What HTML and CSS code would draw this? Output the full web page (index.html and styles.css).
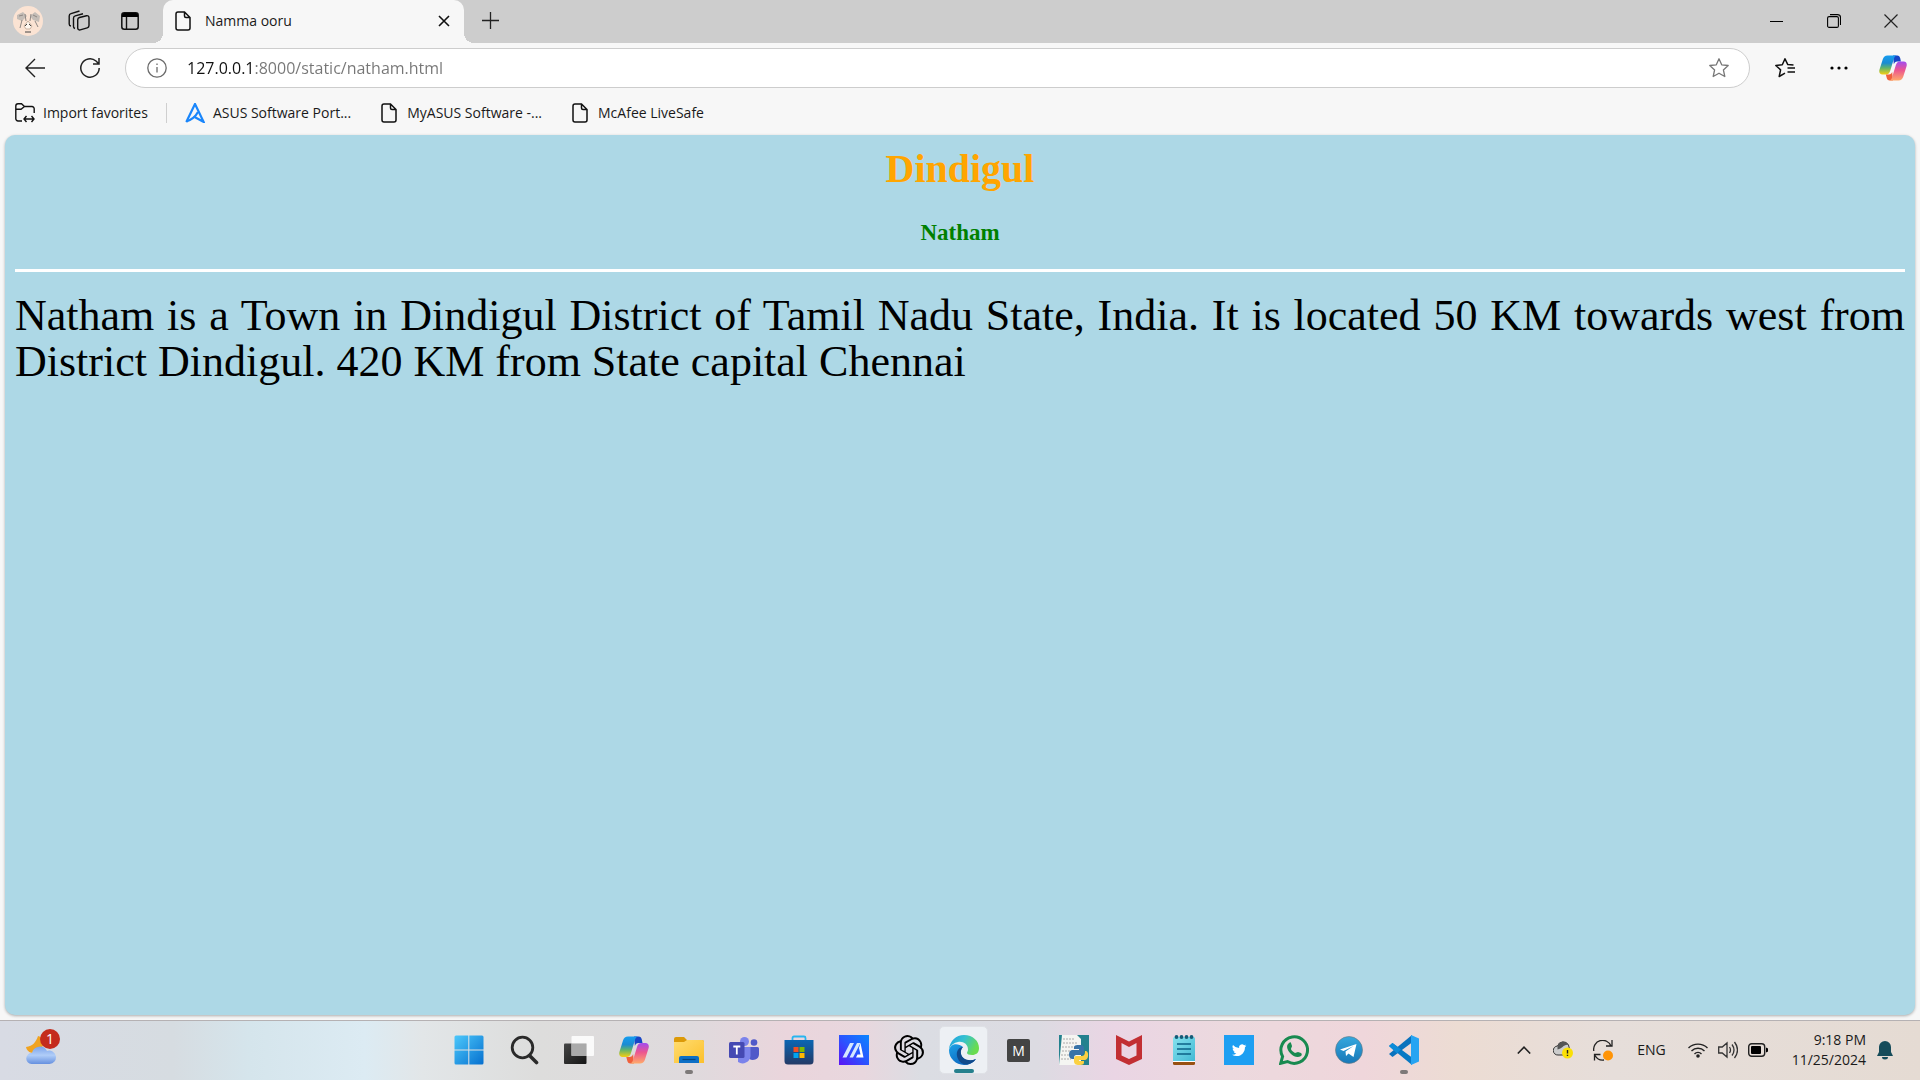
FILE: index.html
```html
<!DOCTYPE html>
<html lang="en">
<head>
<meta charset="utf-8">
<meta name="viewport" content="width=device-width, initial-scale=1">
<title>Namma ooru</title>
<link rel="stylesheet" href="styles.css">
</head>
<body>
<svg class="defs" width="0" height="0" aria-hidden="true">
  <defs>
    <linearGradient id="cp-blue" x1="0" y1="0" x2="0" y2="1"><stop offset="0" stop-color="#159df0"/><stop offset=".4" stop-color="#1b8bd2"/><stop offset=".65" stop-color="#5fb36d"/><stop offset="1" stop-color="#f6cf12"/></linearGradient>
    <linearGradient id="cp-pink" x1="0" y1="0" x2="0" y2="1"><stop offset="0" stop-color="#a14cf0"/><stop offset=".45" stop-color="#ec5590"/><stop offset="1" stop-color="#ffaa6a"/></linearGradient>
    <linearGradient id="win" x1="0" y1="0" x2="1" y2="1"><stop offset="0" stop-color="#4cc8fb"/><stop offset="1" stop-color="#0670cf"/></linearGradient>
    <linearGradient id="dark" x1="0" y1="0" x2="1" y2="1"><stop offset="0" stop-color="#454545"/><stop offset="1" stop-color="#151515"/></linearGradient>
    <linearGradient id="folder" x1="0" y1="0" x2="1" y2="1"><stop offset="0" stop-color="#ffdc70"/><stop offset="1" stop-color="#fcc02b"/></linearGradient>
    <linearGradient id="store" x1="0" y1="0" x2="0" y2="1"><stop offset="0" stop-color="#0b66b3"/><stop offset="1" stop-color="#243a66"/></linearGradient>
    <linearGradient id="ma" x1="1" y1="0" x2="0" y2="1"><stop offset="0" stop-color="#0a86ff"/><stop offset=".5" stop-color="#2a55ff"/><stop offset="1" stop-color="#5b12f5"/></linearGradient>
    <linearGradient id="edge-top" x1="0" y1="0" x2="1" y2=".4"><stop offset="0" stop-color="#1b9de2"/><stop offset=".5" stop-color="#35c1d0"/><stop offset="1" stop-color="#69dc50"/></linearGradient>
    <linearGradient id="edge-body" x1="0" y1="0" x2=".7" y2="1"><stop offset="0" stop-color="#1ca1e6"/><stop offset="1" stop-color="#0b62bd"/></linearGradient>
    <linearGradient id="note" x1="0" y1="0" x2="1" y2="1"><stop offset="0" stop-color="#86e2ee"/><stop offset="1" stop-color="#42b9d4"/></linearGradient>
    <linearGradient id="tele" x1="0" y1="0" x2="0" y2="1"><stop offset="0" stop-color="#35a8de"/><stop offset="1" stop-color="#1878b8"/></linearGradient>
    <linearGradient id="cloud" x1="0" y1="0" x2="0" y2="1"><stop offset="0" stop-color="#7ba3ea"/><stop offset=".5" stop-color="#b0cdf8"/><stop offset="1" stop-color="#6690df"/></linearGradient>
    <symbol id="file" viewBox="0 0 16 20"><path d="M3 1h6.500L15 6.500V17a2 2 0 0 1-2 2H3a2 2 0 0 1-2-2V3a2 2 0 0 1 2-2zM9.500 1v4a1.500 1.500 0 0 0 1.500 1.500h4" fill="none" stroke="#111" stroke-width="1.500"/></symbol>
    <symbol id="copilot" viewBox="0 0 30 28">
      <path d="M15 .5h4.500c2 0 2.800 1.200 3.300 3L23.500 7h-4c-2 0-3 1.200-3.600 3z" fill="#1745c6"/>
      <path d="M9 .5h10c-2 .5-2.600 2-3.200 4L12 17c-.8 2.500-2 4-4.500 4H3.500C1 21-.4 19 .4 16L4 4.500C4.800 2 6.500.5 9 .5z" fill="url(#cp-blue)"/>
      <path d="M15 27.500h-3.500c-2 0-2.800-1.200-3.300-3L7.300 21h3.200c2 0 3-1.200 3.600-3z" fill="#f0603c"/>
      <path d="M21 27.500H11c2-.5 2.600-2 3.200-4L18 11c.8-2.500 2-4 4.500-4h4c2.500 0 3.900 2 3.100 5L26 23.500c-.8 2.500-2.500 4-5 4z" fill="url(#cp-pink)"/>
    </symbol>
  </defs>
</svg>

<div class="window">
  <header class="titlebar">
    <div class="strip-tools">
      <button class="strip-btn" aria-label="Profile">
        <svg width="30" height="30" viewBox="0 0 30 30"><circle cx="15" cy="15" r="15" fill="#fbe3d3"/><path d="M4 9l6-3 4 4-5 5-5-2zM17 10l5-4 5 4-1 6-6-2z" fill="#c4bdb7"/><path d="M6 10l4-1M20 9l4 2M9 14l-2 8M22 15l3 6M12 8l1 7M18 8l-1 7" stroke="#8f8884"/><path d="M11 20l4-5 4 5-2 3h-4z" fill="#fff7ef" stroke="#c9b19f"/><path d="M12 20l2-2M18 20l-2-2M12 26h6" stroke="#444"/></svg>
      </button>
      <button class="strip-btn" aria-label="Workspaces">
        <svg width="22" height="22" viewBox="0 0 22 22" fill="none" stroke="#111" stroke-width="1.400"><path d="M11.500 7.500l7-1.800a2 2 0 0 1 2.500 2v7.800a2.500 2.500 0 0 1-1.800 2.400l-7 2a2 2 0 0 1-2.500-2v-8a2.500 2.500 0 0 1 1.800-2.400z"/><path d="M7 18.500a2 2 0 0 1-1.500-2V8.200a2.500 2.500 0 0 1 1.800-2.400l7.700-2M3 16a2 2 0 0 1-1.800-2V6a2.500 2.500 0 0 1 1.800-2.400L11.500 1"/></svg>
      </button>
      <button class="strip-btn" aria-label="Tab actions">
        <svg width="18" height="18" viewBox="0 0 18 18"><rect x=".8" y=".8" width="16.400" height="16.400" rx="2.500" fill="none" stroke="#111" stroke-width="1.500"/><path d="M1 5V3a2 2 0 0 1 2-2h12a2 2 0 0 1 2 2v2z"/><path d="M5.500 5v12" stroke="#111" stroke-width="1.400"/></svg>
      </button>
    </div>
    <div class="tab">
      <svg width="16" height="20"><use href="#file"/></svg>
      <span class="tab-title">Namma ooru</span>
      <button class="tab-close" aria-label="Close tab"><svg width="12" height="12" viewBox="0 0 12 12"><path d="M1 1l10 10M11 1L1 11" stroke="#111" stroke-width="1.600"/></svg></button>
    </div>
    <button class="new-tab" aria-label="New tab"><svg width="18" height="18" viewBox="0 0 18 18"><path d="M8.500 0v17M0 8.500h17" stroke="#222" stroke-width="1.300"/></svg></button>
    <div class="window-controls">
      <button aria-label="Minimize"><svg width="14" height="14" viewBox="0 0 14 14"><path d="M0 7.500h13" stroke="#000"/></svg></button>
      <button aria-label="Restore"><svg width="14" height="14" viewBox="0 0 14 14" fill="none" stroke="#000" stroke-width="1.100"><rect x=".6" y="2.600" width="10.800" height="10.800" rx="1.500"/><path d="M3 .6h7.500a3 3 0 0 1 3 3V11"/></svg></button>
      <button aria-label="Close window"><svg width="14" height="14" viewBox="0 0 14 14"><path d="M.5.5l13 13M13.500.5l-13 13" stroke="#222" stroke-width="1.200"/></svg></button>
    </div>
  </header>

  <div class="toolbar">
    <button class="tool-btn" aria-label="Back"><svg width="20" height="20" viewBox="0 0 20 20" fill="none" stroke="#222" stroke-width="1.400"><path d="M20 10H1M10 1L1 10l9 9"/></svg></button>
    <button class="tool-btn" aria-label="Refresh"><svg width="20" height="20" viewBox="0 0 20 20" fill="none" stroke="#222" stroke-width="1.500"><path d="M19.200 10A9.200 9.200 0 1 1 16 3l3 3M19 0v6h-6"/></svg></button>
    <div class="address">
      <svg width="20" height="20" viewBox="0 0 20 20" fill="none" stroke="#6b6b6b" stroke-width="1.300"><circle cx="10" cy="10" r="9.200"/><path d="M10 9v5.500M10 5.500v1.600"/></svg>
      <input class="address-input" type="text" aria-label="Address" value="127.0.0.1:8000/static/natham.html">
      <button class="star-btn" aria-label="Add to favorites"><svg width="20" height="20" viewBox="0 0 20 20" fill="none" stroke="#777" stroke-width="1.300" stroke-linejoin="round"><path d="M10 .8l2.700 6 6.500.7-4.800 4.400 1.400 6.600L10 15.200l-5.800 3.300 1.400-6.600L.8 7.500l6.500-.7z"/></svg></button>
    </div>
    <div class="toolbar-end">
      <button class="side-btn" aria-label="Favorites"><svg width="20" height="20" viewBox="0 0 20 20" fill="none" stroke="#111" stroke-width="1.500" stroke-linejoin="round"><path d="M18.500 7l-5.700-.4L10 .8 7.300 6.800.8 7.500l4.800 4.400-1.400 6.600 5.800-3.300M12.500 10H20M12.500 14H20"/></svg></button>
      <button class="side-btn" aria-label="Settings and more"><svg width="18" height="4" viewBox="0 0 18 4"><circle cx="2" cy="2" r="1.600"/><circle cx="9" cy="2" r="1.600"/><circle cx="16" cy="2" r="1.600"/></svg></button>
      <button class="side-btn" aria-label="Copilot"><svg width="28" height="26"><use href="#copilot"/></svg></button>
    </div>
  </div>

  <nav class="favorites" aria-label="Favorites bar">
    <button class="favorite"><svg width="20" height="20" viewBox="0 0 20 20" fill="none" stroke="#111" stroke-width="1.400"><path d="M7 18H3a2.200 2.200 0 0 1-2.200-2.200V3A2.200 2.200 0 0 1 3 .8h3.500l3 2.700H17A2.200 2.200 0 0 1 19.200 5.700V10M.8 6.200H6l3.500-2.700M9 16h10M11.500 13L9 16l2.500 3M16.500 13l2.500 3-2.500 3"/></svg>Import favorites</button>
    <span class="divider"></span>
    <div class="links">
      <a class="favorite" href="#asus"><svg width="20" height="20" viewBox="0 0 20 20" fill="none" stroke="#1a86fb" stroke-width="2.200"><path d="M1.300 19L10 1l8.700 18-10-5.500"/><path d="M1.300 18.500C6 17 10.500 13.500 13 9"/></svg>ASUS Software Port...</a>
      <a class="favorite" href="#myasus"><svg width="20" height="20"><use href="#file"/></svg>MyASUS Software -...</a>
      <a class="favorite" href="#mcafee"><svg width="20" height="20"><use href="#file"/></svg>McAfee LiveSafe</a>
    </div>
  </nav>

  <main class="page">
    <h1>Dindigul</h1>
    <h3>Natham</h3>
    <hr>
    <p>Natham is a Town in Dindigul District of Tamil Nadu State, India. It is located 50 KM towards west from District Dindigul. 420 KM from State capital Chennai</p>
  </main>

  <footer class="taskbar">
    <button class="weather" aria-label="Weather">
      <svg width="30" height="30" viewBox="0 0 30 30"><path d="M12 1c-2 6-5 10-12 11 1 5 5 6 9 6l8-7-2-9z" fill="#f0a321"/><path d="M5.500 29a5.500 5.500 0 1 1 .5-11 8 8 0 0 1 15-2 6.700 6.700 0 1 1 2.500 13z" fill="url(#cloud)"/></svg>
      <span class="badge">1</span>
    </button>

    <div class="apps">
      <button class="app" aria-label="Start"><svg width="30" height="30" viewBox="0 0 30 30" fill="url(#win)"><path d="M2 .5h12.300v14H.5V2A1.500 1.500 0 0 1 2 .5zM15.300.5H28A1.500 1.500 0 0 1 29.500 2v12.500H15.300zM.5 15.500h13.800v14H2A1.500 1.500 0 0 1 .5 28zM15.300 15.500h14.200V28a1.500 1.500 0 0 1-1.500 1.500H15.300z"/></svg></button>
      <button class="app" aria-label="Search"><svg width="30" height="30" viewBox="0 0 30 30" fill="none" stroke="#2a2a2a"><circle cx="13.500" cy="12.500" r="10.300" stroke-width="2.800"/><path d="M20.500 20.500l7 7" stroke-width="3.600" stroke-linecap="round"/></svg></button>
      <button class="app" aria-label="Task view"><svg width="30" height="30" viewBox="0 0 30 30"><rect y="8.500" width="22.500" height="20.500" rx="1" fill="url(#dark)"/><rect x="7.500" y="1" width="22.500" height="20" rx="1" fill="#fff" opacity=".85"/><path d="M7.500 8.500h15V21h-15z" fill="#aaa"/></svg></button>
      <button class="app" aria-label="Copilot"><svg width="30" height="28"><use href="#copilot"/></svg></button>
      <button class="app" aria-label="File Explorer"><svg width="30" height="30" viewBox="0 0 30 30"><path d="M0 4a2 2 0 0 1 2-2h8l3 3h15a2 2 0 0 1 2 2v4H0z" fill="#dc9a08"/><path d="M0 7h10l3-2h15a2 2 0 0 1 2 2v21H0z" fill="url(#folder)"/><path d="M5 28v-5a2 2 0 0 1 2-2h16a2 2 0 0 1 2 2v5z" fill="#0d6fc6"/><path d="M8.500 24.500h13" stroke="#074580" stroke-width="1.200"/></svg><span class="mark"></span></button>
      <button class="app" aria-label="Teams"><svg width="30" height="30" viewBox="0 0 30 30"><circle cx="15.500" cy="6.500" r="4.500" fill="#7b83eb"/><circle cx="25" cy="7.500" r="3.300" fill="#5059c9"/><path d="M20 12h8.500a1.500 1.500 0 0 1 1.500 1.500v6a6 6 0 0 1-10 4z" fill="#5059c9"/><path d="M9 12h12.500v9a8 8 0 0 1-12.500 6z" fill="#7b83eb"/><rect y="7" width="15.500" height="16" rx="1.500" fill="#4549b3"/><path d="M4.300 11.500h7M7.800 11.500v8" stroke="#fff" stroke-width="1.800"/></svg></button>
      <button class="app" aria-label="Microsoft Store"><svg width="30" height="30" viewBox="0 0 30 30"><path d="M8.500 6V3a1.500 1.500 0 0 1 1.500-1.500h10A1.500 1.500 0 0 1 21.500 3v3" fill="none" stroke="#28b5ef" stroke-width="1.800"/><path d="M.5 5h29v21a3.500 3.500 0 0 1-3.500 3.500H4A3.500 3.500 0 0 1 .5 26z" fill="url(#store)"/><path d="M9.500 12h5v5h-5z" fill="#f25022"/><path d="M15.500 12h5v5h-5z" fill="#7fba00"/><path d="M9.500 18h5v5h-5z" fill="#00a4ef"/><path d="M15.500 18h5v5h-5z" fill="#ffb900"/></svg></button>
      <button class="app" aria-label="MyASUS"><svg width="30" height="30" viewBox="0 0 30 30"><path d="M0 0h30v30H0z" fill="url(#ma)"/><path d="M3.500 22.500L11 8h4L7.500 22.500zM10.500 22.500L18 8h3.500L14 22.500z" fill="#d5e7ff"/><path d="M21.500 8l3 14.500H17l1.500-3h3L20 13z" fill="#fff"/></svg></button>
      <button class="app" aria-label="ChatGPT"><svg width="30" height="30" viewBox="0 0 24 24"><path d="M22.280 9.820a5.980 5.980 0 0 0-.52-4.910 6.050 6.050 0 0 0-6.510-2.900A6.070 6.070 0 0 0 4.980 4.180a5.980 5.980 0 0 0-4 2.900 6.050 6.050 0 0 0 .74 7.100 5.980 5.980 0 0 0 .51 4.910 6.050 6.050 0 0 0 6.520 2.900A5.980 5.980 0 0 0 13.260 24a6.060 6.060 0 0 0 5.770-4.210 5.990 5.990 0 0 0 4-2.900 6.060 6.060 0 0 0-.75-7.070zm-9.020 12.610a4.480 4.480 0 0 1-2.880-1.040l.14-.08 4.780-2.760a.8.8 0 0 0 .39-.68v-6.740l2.020 1.170.04.05v5.580a4.500 4.500 0 0 1-4.490 4.500zM3.600 18.300a4.470 4.470 0 0 1-.54-3.010l.14.080 4.780 2.760a.77.77 0 0 0 .78 0l5.840-3.370v2.330l-.03.060-4.830 2.790A4.500 4.500 0 0 1 3.600 18.300zM2.340 7.900a4.490 4.490 0 0 1 2.370-1.980v5.680a.77.77 0 0 0 .39.680l5.810 3.350-2.020 1.170h-.07l-4.830-2.790A4.500 4.500 0 0 1 2.340 7.900zm16.600 3.860L13.100 8.360l2.020-1.160h.07l4.830 2.790a4.490 4.490 0 0 1-.68 8.100v-5.680a.79.79 0 0 0-.4-.65zm2.010-3.030l-.14-.08-4.780-2.780a.78.78 0 0 0-.78 0L9.410 9.230V6.900l.03-.06 4.830-2.790a4.500 4.500 0 0 1 6.680 4.680zM8.310 12.860l-2.020-1.160-.04-.06V6.070a4.500 4.500 0 0 1 7.370-3.450l-.14.080L8.700 5.460a.79.79 0 0 0-.39.680zm1.090-2.360L12 9l2.610 1.500v3L12 15l-2.600-1.500z"/></svg></button>
      <button class="app active" aria-label="Microsoft Edge"><svg width="30" height="30" viewBox="0 0 30 30"><path d="M0 15A15 15 0 0 0 15 30c5 0 9-2 12-6-6 3-14 1-15-5-1-4 1-6 2-7C9 8 2 8 0 15z" fill="url(#edge-body)"/><path d="M8 21c1 5 5 9 10 8.500 4-.8 7-2.700 9-5.500-7 3-14 0-15-5-.6-3 .5-5.500 2-7-4 0-7 4-6 9z" fill="#114a8b"/><path d="M0 14C1 6 7 0 15 0c9 0 15 6 15 13 0 5-3 7-7 7-3 0-5-1-5-2s1-1.600 1-3.500C19 9 14 6 9 7c-4 .7-7 3-9 7z" fill="url(#edge-top)"/></svg><span class="mark"></span></button>
      <button class="app" aria-label="M"><span class="letter-tile">M</span></button>
      <button class="app" aria-label="Python file"><svg width="30" height="30" viewBox="0 0 30 30"><path d="M0 0h30v30H0z" fill="#23818e"/><path d="M3 0h15l4 4v26H0z" fill="#f5f5f2"/><path d="M4 4h12M4 8h15M3 12h15M3 16h8M2 20h8M2 24h10" stroke="#aaa" stroke-dasharray="2 1"/><path d="M20 10c-5 0-5 1-5 4h5v1h-7c-4 0-4 9 0 9h2c0-4 1-4 4-4h3c3 0 3-2 3-6s-2-4-5-4z" fill="#3873a8"/><path d="M20 30c5 0 5-1 5-4h-5v-1h6c4 0 4-9 1-9h-1c0 4-1 5-4 5h-4c-3 0-3 2-3 5s2 4 5 4z" fill="#fbd043"/></svg></button>
      <button class="app" aria-label="McAfee"><svg width="30" height="30" viewBox="0 0 30 30"><path d="M2 0l13 6.500L28 0v24l-13 6-13-6zM7.500 8v12.500L15 24l7.500-3.500V8L15 12z" fill="#c22f33"/></svg></button>
      <button class="app" aria-label="Notepad"><svg width="30" height="30" viewBox="0 0 30 30"><path d="M4 27h22v1.500a1.500 1.500 0 0 1-1.500 1.500h-19A1.500 1.500 0 0 1 4 28.500z" fill="#985012"/><path d="M4 25h22v2H4z" fill="#fff"/><path d="M4 3.500A1.500 1.500 0 0 1 5.500 2h19A1.500 1.500 0 0 1 26 3.500V26H4z" fill="url(#note)"/><path d="M8 9h14M8 14h14M8 19h14" stroke="#0d6287" stroke-width="1.700"/><g fill="#155b77"><circle cx="7.500" cy="2" r="1.900"/><circle cx="12.500" cy="2" r="1.900"/><circle cx="17.500" cy="2" r="1.900"/><circle cx="22.500" cy="2" r="1.900"/></g></svg></button>
      <button class="app" aria-label="Twitter"><svg width="30" height="30" viewBox="0 0 30 30"><path d="M0 0h30v30H0z" fill="#1d9ff2"/><path transform="translate(8 8) scale(.6)" d="M23.950 4.570a10 10 0 0 1-2.820.77 4.960 4.960 0 0 0 2.160-2.720 9.900 9.900 0 0 1-3.120 1.180 4.920 4.920 0 0 0-8.380 4.480A13.930 13.930 0 0 1 1.640 3.160a4.920 4.920 0 0 0 1.520 6.570 4.900 4.900 0 0 1-2.230-.61v.060a4.920 4.920 0 0 0 3.950 4.830 5 5 0 0 1-2.210.08 4.940 4.940 0 0 0 4.600 3.420A9.870 9.870 0 0 1 0 19.540a14 14 0 0 0 7.550 2.210c9.050 0 14-7.500 14-14v-.630a10 10 0 0 0 2.400-2.550z" fill="#fff"/></svg></button>
      <button class="app" aria-label="WhatsApp"><svg width="30" height="30" viewBox="0 0 30 30"><path d="M1.700 28.300l1.900-6.800A13.300 13.300 0 1 1 8.500 26.500z" fill="none" stroke="#188a50" stroke-width="3"/><path d="M10 8c-4 3-1 8 2 11s7 4 10 2c1-1 1-2 0-3l-3-1c-1 0-2 1-3 1-2-1-4-3-4-4s1-2 1-3l-1-3c0-1-1-1-2 0z" fill="#188a50"/></svg></button>
      <button class="app" aria-label="Telegram"><svg width="30" height="30" viewBox="0 0 30 30"><circle cx="15" cy="15" r="13.500" fill="url(#tele)" stroke="#68777e" stroke-width=".6"/><path d="M6 14.500L22.500 9 19.500 22l-5-3.500-2.500 2.500-.5-4.500 8-5.500-10 5z" fill="#fff"/></svg></button>
      <button class="app" aria-label="Visual Studio Code"><svg width="30" height="30" viewBox="0 0 30 30"><path d="M0 11l3.500-3L23 22.500V30z" fill="#0879c4"/><path d="M0 19l3.500 3L23 7.500V0z" fill="#0a72bd"/><path d="M0 11l3.500-3L12 14.500 8 18.500z" fill="#0c8bd8"/><path d="M22 0l8 3.500v23L22 30z" fill="#27a4f2"/></svg><span class="mark"></span></button>
    </div>

    <div class="tray">
      <button aria-label="Show hidden icons"><svg width="14" height="8" viewBox="0 0 14 8"><path d="M.8 7.500L7 1.200l6.200 6.300" fill="none" stroke="#222" stroke-width="1.600"/></svg></button>
      <button class="drive" aria-label="OneDrive"><svg width="20" height="18" viewBox="0 0 20 18"><path d="M5 14a4.500 4.500 0 0 1-.5-9A6 6 0 0 1 15.500 4L18 14z" fill="#ccc" stroke="#333"/><path d="M4.500 5A6 6 0 0 1 15.500 4c-5-1-6 4-11 4.500z" fill="#555"/><circle cx="14.500" cy="12" r="5.500" fill="#fbe006"/><path d="M14.500 9v3.500M14.500 13.700v1.300" stroke="#222" stroke-width="1.400"/></svg></button>
      <button aria-label="Windows Update"><svg width="20" height="21" viewBox="0 0 20 21" fill="none" stroke="#222" stroke-width="1.300"><path d="M.8 11A9 9 0 0 1 18 6M19 0v6h-6M11 20a9 9 0 0 1-9-4.500M1.500 20.500v-6h6"/><circle cx="15" cy="15.500" r="5" fill="#ff9406" stroke="none"/></svg></button>
      <button class="lang">ENG</button>
      <button class="status" aria-label="Network, volume and battery">
        <svg width="20" height="16" viewBox="0 0 20 16" fill="none" stroke="#222" stroke-width="1.400"><path d="M.5 6a13.500 13.500 0 0 1 19 0M3.500 9a9.200 9.200 0 0 1 13 0M6.500 12a5 5 0 0 1 7 0"/><circle cx="10" cy="14" r="1.800" fill="#222" stroke="none"/></svg>
        <svg width="20" height="18" viewBox="0 0 20 18" fill="none" stroke="#333" stroke-width="1.300"><path d="M.7 6h3.500L9 2v14l-4.800-4H.7zM11.500 6q2 3 0 6M14 3.500q4 5.500 0 11M16.500 1q6 8 0 16"/></svg>
        <svg width="20" height="14" viewBox="0 0 20 14"><rect x=".7" y=".7" width="16" height="12.600" rx="3" fill="none" stroke="#222" stroke-width="1.400"/><rect x="3" y="3" width="10" height="8" rx="1"/><path d="M18 4.500l2 1v3l-2 1z"/></svg>
      </button>
      <button class="clock"><span>9:18 PM</span><span>11/25/2024</span></button>
      <button aria-label="Notifications"><svg width="16" height="20" viewBox="0 0 16 20" fill="#164c5a"><path d="M2 7a6 6 0 0 1 12 0v5l2 4H0l2-4zM5 17h6a3 2.500 0 0 1-6 0z"/></svg></button>
    </div>
  </footer>
</div>
</body>
</html>
```
FILE: styles.css
```css
* { box-sizing: border-box; }

body {
  margin: 0;
  background: #f7f7f7;
  color: #1a1a1a;
  font-family: "Open Sans", "Noto Sans", sans-serif;
  font-size: 14px;
  line-height: 20px;
}

button {
  display: flex;
  align-items: center;
  justify-content: center;
  padding: 0;
  border: 0;
  background: none;
  color: inherit;
  font: inherit;
}

svg { display: block; flex: none; }
.defs { position: absolute; }

.window {
  display: flex;
  flex-direction: column;
  min-height: 100vh;
}

/* Tab strip */
.titlebar {
  display: flex;
  height: 43px;
  background: #cdcdcd;
}
.strip-tools {
  display: flex;
  padding: 0 8px 2px 2px;
}
.strip-btn { width: 51px; }
.tab {
  position: relative;
  display: flex;
  align-items: center;
  gap: 14px;
  width: 301px;
  padding: 0 14px 1px 12px;
  border-radius: 10px 10px 0 0;
  background: #f7f7f7;
}
.tab::before,
.tab::after {
  content: "";
  position: absolute;
  bottom: 0;
  width: 10px;
  height: 10px;
}
.tab::before {
  right: 100%;
  background: radial-gradient(circle at 0 0, #cdcdcd 10px, #f7f7f7 10px);
}
.tab::after {
  left: 100%;
  background: radial-gradient(circle at 100% 0, #cdcdcd 10px, #f7f7f7 10px);
}
.tab-title { flex: 1; }
.new-tab { width: 54px; height: 42px; }
.window-controls {
  display: flex;
  height: 42px;
  margin-left: auto;
  padding-right: 1px;
}
.window-controls button { width: 57px; }

/* Address row */
.toolbar {
  display: flex;
  align-items: center;
  padding: 5px 0 3px 7px;
}
.tool-btn { width: 55px; height: 40px; }
.address {
  display: flex;
  flex: 1;
  align-items: center;
  height: 40px;
  margin: 0 8px;
  padding: 0 20px 0 21px;
  border: 1px solid #cdcdcd;
  border-radius: 20px;
  background: #fff;
}
.address-input {
  flex: 1;
  min-width: 0;
  margin: 0 20px;
  padding: 0;
  border: 0;
  outline: 0;
  background: linear-gradient(90deg, #111 68px, #767676 68px);
  background-clip: text;
  color: transparent;
  font: inherit;
  font-size: 16px;
  line-height: 24px;
}
.toolbar-end { display: flex; }
.side-btn { width: 54px; height: 40px; }

/* Favorites bar */
.favorites {
  display: flex;
  align-items: center;
  gap: 18px;
  height: 44px;
  padding: 0 15px;
}
.links { display: flex; gap: 28px; }
.favorite {
  display: flex;
  align-items: center;
  gap: 8px;
  color: inherit;
  text-decoration: none;
}
.divider { width: 1px; height: 20px; background: #cfcfcf; }

/* Web page */
.page {
  flex: 1;
  margin: 0 5px 5px;
  padding: 11px 10px;
  border-radius: 10px;
  background: #add8e6;
  box-shadow: 0 1px 3px rgba(0, 0, 0, .3);
  font-family: "Liberation Serif", serif;
}
.page h1 {
  margin: 0 0 27px;
  color: orange;
  font-size: 40px;
  line-height: 46px;
  text-align: center;
}
.page h3 {
  margin: 0 0 22px;
  color: green;
  font-size: 23px;
  line-height: 28px;
  text-align: center;
}
.page hr {
  height: 3px;
  margin: 0 0 21px;
  border: 0;
  background: #fff;
}
.page p {
  margin: 0;
  color: #000;
  font-family: Georgia, "Liberation Serif", serif;
  font-size: 44px;
  line-height: 46px;
  text-align: justify;
}

/* Taskbar */
.taskbar {
  display: grid;
  grid-template-columns: 44fr auto 49fr;
  height: 60px;
  padding-bottom: 1px;
  border-top: 1px solid #b5b1b3;
  background: linear-gradient(90deg, #d8dbe4 0%, #d6dce1 9%, #d5e5ec 13%, #dcebf3 19%, #e2e6e8 22%, #dddddc 28%, #dfdadd 36%, #ead5dc 41%, #e8d7de 45%, #dbdde3 48%, #dcdbe2 54%, #ead5e4 58%, #ecd9de 64%, #efd6db 71%, #ecdcd3 76%, #e6deda 84%, #e5dbd3 100%);
}
.weather {
  position: relative;
  justify-self: start;
  width: 60px;
  margin-left: 11px;
}
.badge {
  position: absolute;
  top: 8px;
  right: 11px;
  width: 20px;
  height: 20px;
  border-radius: 50%;
  background: #c42b1c;
  color: #fff;
  font-size: 14px;
  text-align: center;
}
.apps { display: flex; align-items: center; padding-left: 2px; }
.app {
  position: relative;
  width: 55px;
  height: 48px;
}
.app.active {
  width: 49px;
  margin: 0 3px;
  border: 1px solid #dfe1e6;
  border-radius: 5px;
  background: #edf0f4;
}
.mark {
  position: absolute;
  bottom: 0;
  left: 50%;
  width: 8px;
  height: 4px;
  margin-left: -4px;
  border-radius: 2px;
  background: #7d7979;
}
.active .mark {
  width: 20px;
  margin-left: -10px;
  background: #26808d;
}
.letter-tile {
  width: 23px;
  height: 23px;
  border-radius: 2px;
  background: #444;
  color: #fff;
  font-size: 14px;
  line-height: 23px;
}
.tray {
  display: flex;
  align-items: center;
  justify-content: flex-end;
  gap: 20px;
  padding-right: 27px;
}
.drive { margin-left: 2px; }
.lang { margin: 0 2px 0 4px; }
.status { gap: 10px; margin-right: 4px; }
.clock {
  flex-direction: column;
  align-items: flex-end;
}
.tray .clock { margin-right: -9px; }
```
